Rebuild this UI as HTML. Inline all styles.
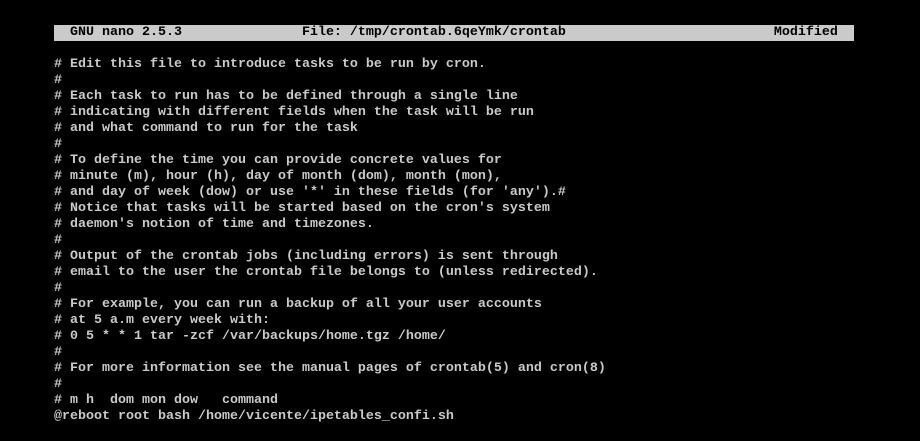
<!DOCTYPE html>
<html><head><style>
html,body{margin:0;padding:0;background:#000;width:920px;height:441px;overflow:hidden}
pre{position:absolute;left:54px;top:25px;margin:0;font-family:"Liberation Mono",monospace;font-size:13.33px;line-height:16px;color:#cacaca;white-space:pre;font-weight:bold}
.bar{background:#cacaca;color:#000;display:inline-block;width:800px}
</style></head><body>
<pre><span class="bar">  GNU nano 2.5.3               File: /tmp/crontab.6qeYmk/crontab                          Modified  </span>

# Edit this file to introduce tasks to be run by cron.
#
# Each task to run has to be defined through a single line
# indicating with different fields when the task will be run
# and what command to run for the task
#
# To define the time you can provide concrete values for
# minute (m), hour (h), day of month (dom), month (mon),
# and day of week (dow) or use '*' in these fields (for 'any').#
# Notice that tasks will be started based on the cron's system
# daemon's notion of time and timezones.
#
# Output of the crontab jobs (including errors) is sent through
# email to the user the crontab file belongs to (unless redirected).
#
# For example, you can run a backup of all your user accounts
# at 5 a.m every week with:
# 0 5 * * 1 tar -zcf /var/backups/home.tgz /home/
#
# For more information see the manual pages of crontab(5) and cron(8)
#
# m h  dom mon dow   command
@reboot root bash /home/vicente/ipetables_confi.sh</pre>
</body></html>
